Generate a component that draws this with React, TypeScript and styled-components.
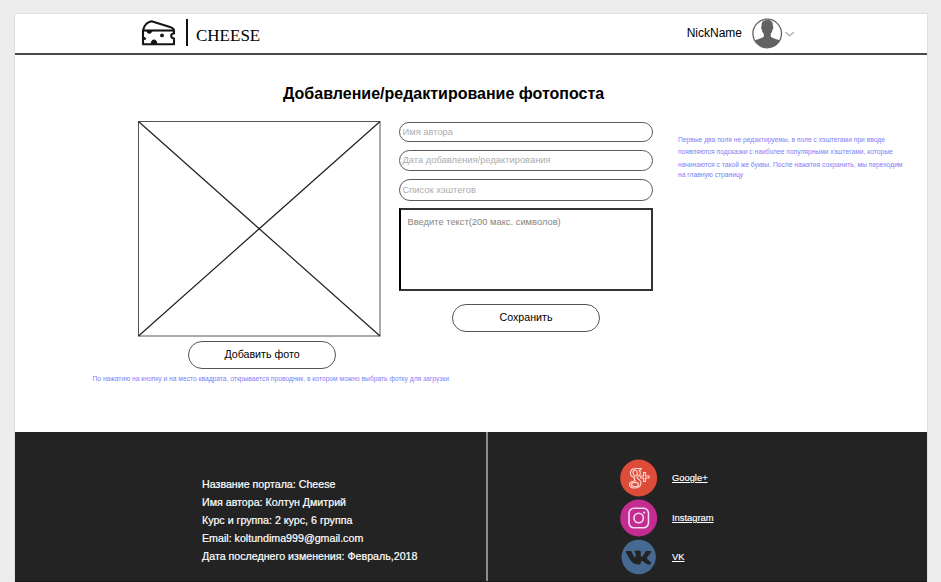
import React from "react";
import styled, { createGlobalStyle } from "styled-components";

const GlobalStyle = createGlobalStyle`
  * { box-sizing: border-box; }
  html, body { margin: 0; background: #ededed; }
  body { font-family: "Liberation Sans", Arial, sans-serif; color: #000; overflow: hidden; }
`;

const Page = styled.div`
  display: flex;
  flex-direction: column;
  width: 941px;
  height: 582px;
  padding: 13px 13px 0 14px;
`;

const Frame = styled.div`
  display: flex;
  flex-direction: column;
  flex: 1;
  background: #fff;
  border: 1px solid #e0e0e0;
  border-bottom: 0;
`;

const Header = styled.header`
  display: flex;
  height: 41px;
  padding: 0 132px 0 126px;
  justify-content: space-between;
  border-bottom: 2px solid #49494b;
`;

const Brand = styled.div`
  display: flex;
  align-items: flex-start;
  svg { margin-top: 5px; }
`;

const BrandRule = styled.span`
  width: 2px;
  height: 27px;
  margin: 5px 8px 0 10px;
  background: #111;
`;

const BrandName = styled.span`
  margin-top: 12px;
  font: 17px/20px "Liberation Serif", "Times New Roman", serif;
`;

const User = styled.div`
  display: flex;
  align-items: flex-start;
  svg { flex: none; margin-top: 4px; }
`;

const NickName = styled.span`
  margin: 12px 10px 0 0;
  font-size: 12px;
  line-height: 14px;
`;

const Main = styled.main`
  display: flex;
  flex-direction: column;
  height: 377px;
`;

const Title = styled.h1`
  margin: 30px 0 0 268px;
  font-size: 16px;
  line-height: 18px;
  font-weight: 700;
  white-space: nowrap;
`;

const Columns = styled.div`
  display: flex;
  align-items: flex-start;
  margin-top: 18px;
  padding-left: 77px;
`;

const PhotoColumn = styled.section`
  display: flex;
  flex-direction: column;
  width: 307px;
  svg { display: block; margin-left: 46px; }
`;

const FormColumn = styled.section`
  display: flex;
  flex-direction: column;
  width: 254px;
  padding-top: 1px;
`;

const Field = styled.div<{ $height: number; $gap: number }>`
  display: flex;
  align-items: center;
  height: ${(p) => p.$height}px;
  margin-bottom: ${(p) => p.$gap}px;
  padding: 0 0 1px 2.5px;
  border: 1px solid #5c5c5c;
  border-radius: 11px;
  color: #adadad;
  font-size: 9.35px;
  line-height: 12px;
  white-space: nowrap;
`;

const TextArea = styled.div`
  height: 83px;
  padding: 6px 6.5px;
  border: 2px solid #333;
  border-left-color: #000;
  color: #858585;
  font-size: 9.35px;
  line-height: 12px;
`;

const Button = styled.button<{ $top: number; $left: number }>`
  width: 148px;
  height: 28px;
  margin: ${(p) => p.$top}px 0 0 ${(p) => p.$left}px;
  padding: 0 0 2px;
  border: 1px solid #555;
  border-radius: 14px;
  background: #fff;
  color: #000;
  font: 10.67px/14px "Liberation Sans", Arial, sans-serif;
`;

const Note = styled.p<{ $top: number; $left: number }>`
  margin: ${(p) => p.$top}px 0 0 ${(p) => p.$left}px;
  color: #7c80f8;
  font-size: 6.7px;
  line-height: 12px;
  white-space: nowrap;
`;

const NoteLine = styled.span<{ $height: number }>`
  display: block;
  height: ${(p) => p.$height}px;
  line-height: 12px;
`;

const Footer = styled.footer`
  display: grid;
  grid-template-columns: 473px 1fr;
  flex: 1;
  background: #232323;
  border-bottom: 1px solid #191719;
  color: #fff;
`;

const About = styled.div`
  padding: 43px 0 0 187px;
  border-right: 2px solid #8c8c8c;
  font-size: 10.67px;
  line-height: 18px;
  white-space: nowrap;
  -webkit-text-stroke: 0.2px #fff;
`;

const AboutLine = styled.div`
  width: max-content;
`;

const Social = styled.div`
  display: flex;
  flex-direction: column;
  padding: 26px 0 0 132px;
`;

const SocialRow = styled.div<{ $height: number }>`
  display: flex;
  align-items: center;
  gap: 14px;
  height: ${(p) => p.$height}px;
  svg { flex: none; }
`;

const SocialLink = styled.a`
  color: #fff;
  font-size: 9.35px;
  line-height: 12px;
  text-decoration: underline;
  -webkit-text-stroke: 0.15px #fff;
`;

const CheeseIcon = () => (
  <svg width="35" height="28" viewBox="0 0 35 28" fill="none" stroke="#151515" strokeWidth="2.100">
    <path d="M2 11.500 C3 6 6 3 10.500 2.200 L29 8 C32 9 33.300 10 33 12 V14.500 C29.500 14 29 19 33 19.500 V25.300 H2 Z" strokeLinejoin="round" />
    <path d="M2 11.500 H33" />
    <path d="M6 12 C6 15 10.500 15 11 12Z" fill="#151515" strokeWidth="1" />
    <circle cx="21" cy="16.400" r="1.900" fill="#151515" stroke="none" />
    <path d="M10.500 25.300 C9 19.500 17 19.500 15.500 25.300Z" fill="#151515" strokeWidth="1" />
    <circle cx="3.500" cy="19.500" r="1.500" fill="#151515" stroke="none" />
  </svg>
);

const Avatar = () => (
  <svg width="43" height="31" viewBox="0 0 43 31">
    <circle cx="15.200" cy="15.500" r="14.300" fill="#fff" stroke="#626262" strokeWidth="1.300" />
    <path d="M3 22.500 C5 21.200 10 20.500 11.800 18.500 V16 C10.500 14.500 10 13 9.800 11.300 C8.800 10.800 8.800 8.500 9.700 8.200 C9.200 4 11 2 15.200 2 C19.400 2 21.200 4 20.800 8.200 C21.700 8.500 21.600 10.800 20.600 11.300 C20.400 13 19.900 14.500 18.700 16 V18.500 C20.500 20.500 25.500 21.200 27.500 22.500 C22 32.300 8.500 32.300 3 22.500Z" fill="#626262" />
    <path d="M33.500 14 L37.700 17.800 L42 14" fill="none" stroke="#b5b5b5" strokeWidth="1.500" />
  </svg>
);

const PhotoPlaceholder = () => (
  <svg width="243" height="216" viewBox="0 0 243 216" fill="none" stroke="#222">
    <rect x=".5" y=".5" width="241.500" height="214.500" stroke="#555" />
    <path d="M.5 .5 L242 215 M242 .5 L.5 215" strokeWidth="1.200" />
  </svg>
);

const GoogleIcon = () => (
  <svg width="38" height="38" viewBox="0 0 38 38" fill="none" stroke="#f8d5cf" strokeWidth="1.200">
    <circle cx="18.700" cy="19" r="18.500" fill="#dd4b39" stroke="none" />
    <path d="M21.500 9.500 H15.500 C9 9.500 8.700 18.200 14.800 18.400 C13.500 20 14.500 21 15.500 22 C7.500 22 8 29 14.500 29 C22 29 22.500 22.500 18.200 20 C16.500 18.800 17.500 18.200 18.800 17 C21 15 20.500 12.500 19 11 H20.500Z" strokeLinejoin="round" />
    <ellipse cx="15.200" cy="14" rx="2.100" ry="3" transform="rotate(-12 15.200 14)" />
    <ellipse cx="15" cy="25.400" rx="3.500" ry="2.100" />
    <path d="M23.500 13.500 H25.500 V17 H29 V19 H25.500 V22.500 H23.500 V19 H20.800 V17 H23.500Z" />
  </svg>
);

const InstagramIcon = () => (
  <svg width="38" height="38" viewBox="0 0 38 38" fill="none" stroke="#f6dcef" strokeWidth="1.600">
    <circle cx="18.700" cy="19" r="18.500" fill="#c32d91" stroke="none" />
    <rect x="9" y="9.300" width="19.500" height="19.500" rx="5" />
    <circle cx="18.700" cy="19" r="4.700" />
    <circle cx="24.200" cy="13.600" r="1.100" fill="#f6dcef" stroke="none" />
  </svg>
);

const VkIcon = () => (
  <svg width="38" height="38" viewBox="0 0 38 38">
    <circle cx="18.700" cy="19" r="17.200" fill="#466991" />
    <path d="M6.500 13 H10.800 C12 13 12.500 17.500 15 19.500 C16.200 20 16.300 14.500 14.300 13.700 C15.500 12.200 21 12.300 20.800 13.800 V18.500 C22.500 19.800 24.500 15.500 25.500 13.500 C25.800 13 26 13 26.500 13 H30.500 C33 13 28.500 17.500 27 19.600 C26 21 31 23.500 31.300 25.500 C31.300 26.800 27.500 26.500 26.500 26 C24.800 25.200 23 22.300 21.500 23 C20.300 23.600 21.500 26.500 19.500 26.500 C11.500 27 9 20 6 14.200 C5.800 13.500 6 13 6.500 13Z" fill="#232323" />
  </svg>
);

export default function App() {
  return (
    <>
      <GlobalStyle />
      <Page>
        <Frame>
          <Header>
            <Brand><CheeseIcon /><BrandRule /><BrandName>CHEESE</BrandName></Brand>
            <User><NickName>NickName</NickName><Avatar /></User>
          </Header>
          <Main>
            <Title>Добавление/редактирование фотопоста</Title>
            <Columns>
              <PhotoColumn>
                <PhotoPlaceholder />
                <Button $top={4} $left={96}>Добавить фото</Button>
                <Note $top={4} $left={0.5}>По нажатию на кнопку и на место квадрата, открывается проводник, в котором можно выбрать фотку для загрузки</Note>
              </PhotoColumn>
              <FormColumn>
                <Field $height={20} $gap={8}>Имя автора</Field>
                <Field $height={21} $gap={8}>Дата добавления/редактирования</Field>
                <Field $height={22} $gap={7}>Список хэштегов</Field>
                <TextArea>Введите текст(200 макс. символов)</TextArea>
                <Button $top={13} $left={53}>Сохранить</Button>
              </FormColumn>
              <Note $top={13} $left={25}>
                <NoteLine $height={12}>Первые два поля не редактируемы, в поле с хэштегами при вводе</NoteLine>
                <NoteLine $height={13}>появляются подсказки с наиболее популярными хэштегами, которые</NoteLine>
                <NoteLine $height={10}>начинаются с такой же буквы. После нажатия сохранить, мы переходим</NoteLine>
                <NoteLine $height={12}>на главную страницу</NoteLine>
              </Note>
            </Columns>
          </Main>
          <Footer>
            <About>
              <AboutLine>Название портала: Cheese</AboutLine>
              <AboutLine>Имя автора: Колтун Дмитрий</AboutLine>
              <AboutLine>Курс и группа: 2 курс, 6 группа</AboutLine>
              <AboutLine>Email: koltundima999@gmail.com</AboutLine>
              <AboutLine>Дата последнего изменения: Февраль,2018</AboutLine>
            </About>
            <Social>
              <SocialRow $height={40}><GoogleIcon /><SocialLink>Google+</SocialLink></SocialRow>
              <SocialRow $height={40}><InstagramIcon /><SocialLink>Instagram</SocialLink></SocialRow>
              <SocialRow $height={37}><VkIcon /><SocialLink>VK</SocialLink></SocialRow>
            </Social>
          </Footer>
        </Frame>
      </Page>
    </>
  );
}
